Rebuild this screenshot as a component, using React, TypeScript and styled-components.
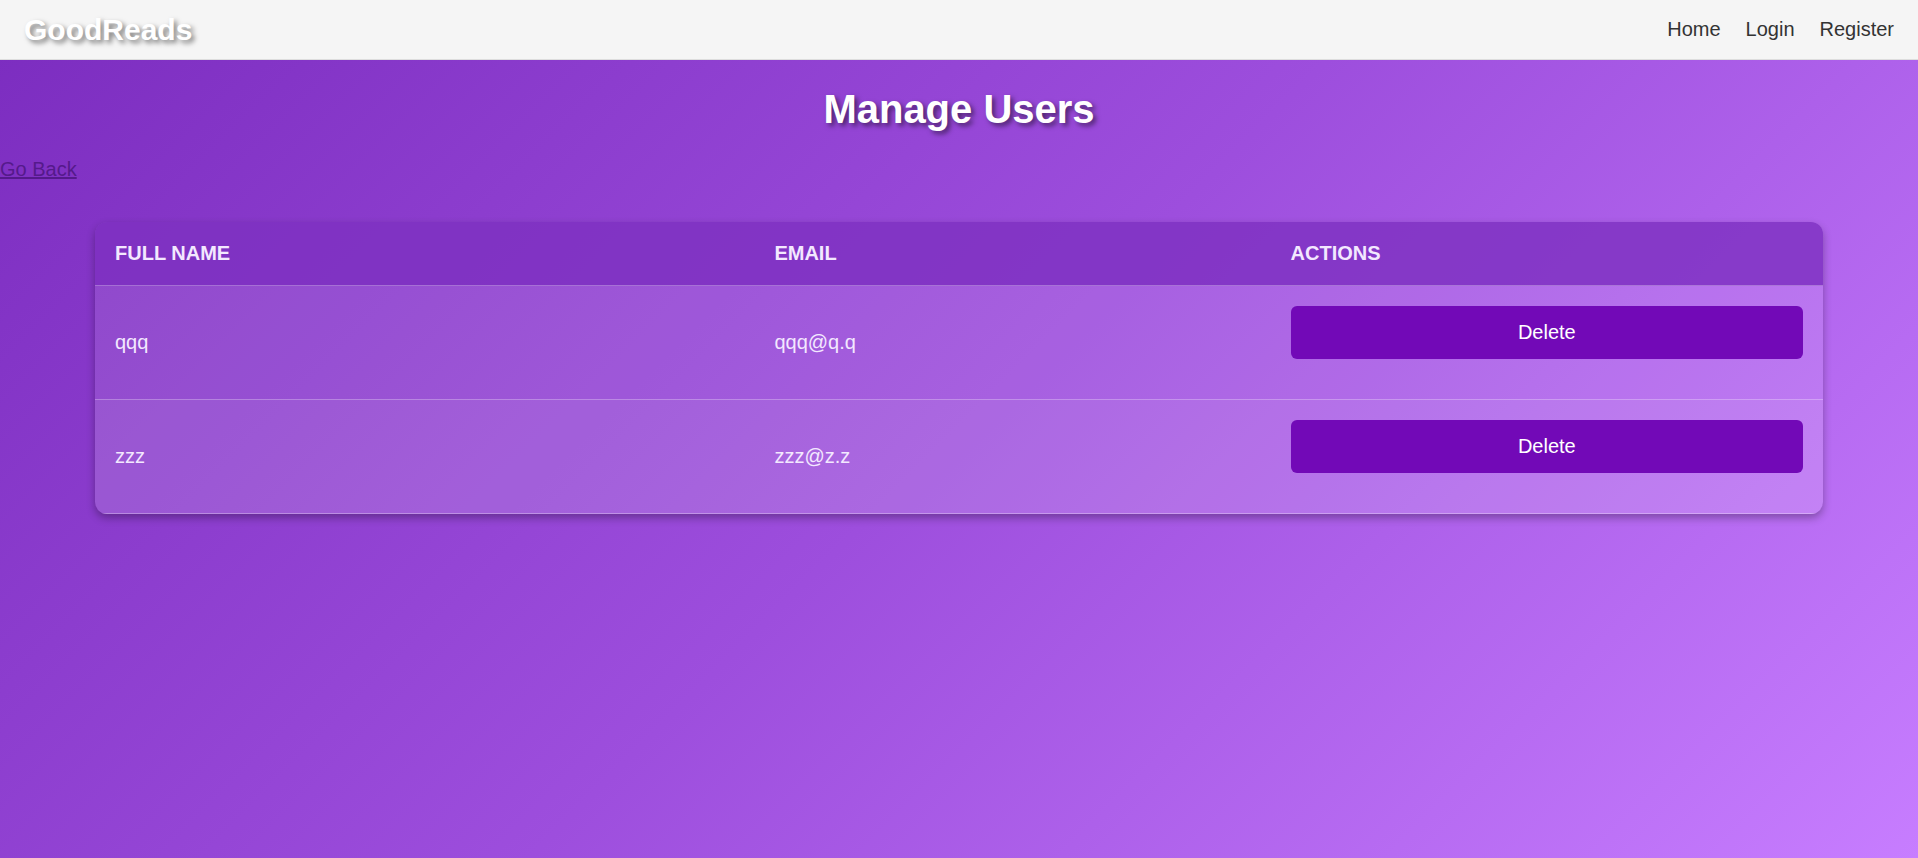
import React from "react";
import styled, { createGlobalStyle } from "styled-components";

const GlobalStyle = createGlobalStyle`
  * { box-sizing: border-box; }
  body {
    margin: 0;
    min-height: 100vh;
    font-family: Arial, "Liberation Sans", sans-serif;
    background: linear-gradient(135deg, #7b2cbf, #9d4edd, #c77dff);
    color: #fff;
  }
`;

const Header = styled.header`
  display: flex;
  justify-content: space-between;
  align-items: center;
  height: 60px;
  padding: 0 24px;
  background: #f5f5f5;
  border-bottom: 1px solid #ddd;
`;

const Brand = styled.div`
  font-size: 30px;
  line-height: 35px;
  font-weight: 700;
  text-shadow: 3px 3px 5px rgba(0, 0, 0, 0.5);
`;

const Nav = styled.nav`
  display: flex;
  gap: 25px;
`;

const NavLink = styled.a`
  color: #333;
  font-size: 20px;
  line-height: 23px;
  text-decoration: none;
`;

const Title = styled.h1`
  margin: 24px 0;
  font-size: 40px;
  line-height: 50px;
  text-align: center;
  text-shadow: 3px 3px 5px rgba(0, 0, 0, 0.5);
`;

const BackLink = styled.a`
  display: block;
  width: fit-content;
  font-size: 20px;
  line-height: 23px;
  color: #551a8b;
  text-decoration: underline;
`;

const Table = styled.table`
  width: calc(100% - 190px);
  margin: 41px auto;
  border-collapse: collapse;
  border-radius: 12px;
  overflow: hidden;
  background: rgba(255, 255, 255, 0.1);
  box-shadow: 0 4px 8px rgba(0, 0, 0, 0.3);
`;

const HeadCell = styled.th`
  padding: 20px;
  text-align: left;
  font-size: 20px;
  line-height: 23px;
  text-transform: uppercase;
  color: #f3e8ff;
  background: rgba(123, 44, 191, 0.8);
  border-bottom: 1px solid rgba(255, 255, 255, 0.3);
`;

const Row = styled.tr`
  &:nth-child(even) { background: rgba(255, 255, 255, 0.05); }
`;

const Cell = styled.td`
  padding: 20px;
  font-size: 20px;
  line-height: 23px;
  color: #f3e8ff;
  border-bottom: 1px solid rgba(255, 255, 255, 0.3);
`;

const DeleteButton = styled.button`
  display: block;
  width: 100%;
  margin-bottom: 20px;
  padding: 15px;
  border: 0;
  border-radius: 6px;
  background: #7209b7;
  color: #fff;
  font-family: inherit;
  font-size: 20px;
  line-height: 23px;
  cursor: pointer;
`;

const users = [
  { name: "qqq", email: "qqq@q.q" },
  { name: "zzz", email: "zzz@z.z" },
];

export default function App() {
  return (
    <>
      <GlobalStyle />
      <Header>
        <Brand>GoodReads</Brand>
        <Nav>
          <NavLink href="#home">Home</NavLink>
          <NavLink href="#login">Login</NavLink>
          <NavLink href="#register">Register</NavLink>
        </Nav>
      </Header>
      <main>
        <Title>Manage Users</Title>
        <BackLink href="#back">Go Back</BackLink>
        <Table>
          <thead>
            <tr>
              <HeadCell>Full Name</HeadCell>
              <HeadCell>Email</HeadCell>
              <HeadCell>Actions</HeadCell>
            </tr>
          </thead>
          <tbody>
            {users.map((user) => (
              <Row key={user.email}>
                <Cell>{user.name}</Cell>
                <Cell>{user.email}</Cell>
                <Cell><DeleteButton type="button">Delete</DeleteButton></Cell>
              </Row>
            ))}
          </tbody>
        </Table>
      </main>
    </>
  );
}
